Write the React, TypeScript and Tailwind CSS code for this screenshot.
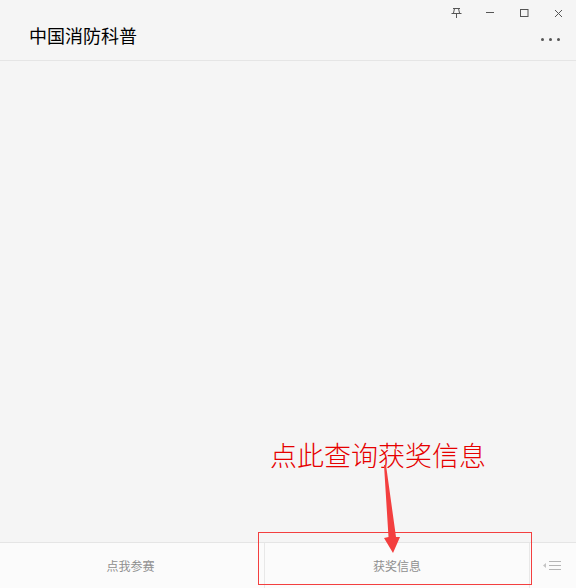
import React from "react";

const cjk = "font-['Noto_Sans_CJK_SC','Liberation_Sans',sans-serif]";

export default function App() {
  return (
    <div className={`relative flex h-[588px] w-[576px] flex-col overflow-hidden bg-[#f5f5f5] ${cjk}`}>
      <header className="relative flex h-[61px] shrink-0 items-end border-b border-[#e5e5e5] pb-[11px] pl-[29px]">
        <h1 className="text-[18px] leading-[27px] font-normal text-black">中国消防科普</h1>
        <div className="absolute top-[3px] right-0 flex h-[20px] items-center text-[#555]">
          <span className="flex w-[34px] justify-center">
            <svg width="11" height="10" viewBox="0 0 11 10" fill="none" stroke="#555" strokeWidth="1">
              <path d="M2 .5h7M3.5.5 2.5 5M7.5.5 8.5 5M.5 5.5h10M5.5 5.5V10" />
            </svg>
          </span>
          <span className="flex w-[34px] justify-center">
            <svg width="8" height="2" viewBox="0 0 8 2"><path d="M0 .5h8" stroke="#555" /></svg>
          </span>
          <span className="flex w-[34px] justify-center">
            <svg width="9" height="9" viewBox="0 0 9 9" fill="none"><rect x=".5" y=".5" width="7.5" height="7" stroke="#555" /></svg>
          </span>
          <span className="flex w-[35px] justify-center">
            <svg width="9" height="9" viewBox="0 0 9 9" fill="none" stroke="#555"><path d="m1 1 7 7M8 1 1 8" /></svg>
          </span>
        </div>
        <div className="absolute top-[38px] right-[16px] flex gap-[5px]">
          <span className="h-[3px] w-[3px] rounded-full bg-[#555]" />
          <span className="h-[3px] w-[3px] rounded-full bg-[#555]" />
          <span className="h-[3px] w-[3px] rounded-full bg-[#555]" />
        </div>
      </header>

      <main className="flex-1" />

      <footer className="flex h-[46px] shrink-0 border-t border-[#e5e5e5] bg-[#fbfbfb] text-[12px] text-[#8f8f8f]">
        <div className="flex w-[265px] items-center justify-center border-r border-[#e8e8e8] pr-[3px]">点我参赛</div>
        <div className="flex w-[265px] items-center justify-center border-r border-[#e8e8e8]">获奖信息</div>
        <div className="flex flex-1 items-center pl-[13px]">
          <svg width="18" height="11" viewBox="0 0 18 11" fill="none">
            <path d="M0 5.5 3 3v5z" fill="#c4c4c4" />
            <path d="M6 1.5h12M6 5.5h12M6 9.5h12" stroke="#b5b5b5" />
          </svg>
        </div>
      </footer>

      <div className="absolute top-[532px] left-[258px] h-[53px] w-[274px] border border-[#f33f3f]" />
      <div className="absolute top-[435px] left-[270px] text-[27px] leading-[40px] font-light whitespace-nowrap text-[#e60000]">点此查询获奖信息</div>
      <svg className="absolute top-[465px] left-[378px]" width="28" height="90" viewBox="0 0 28 90">
        <path d="M6 0 8 0 18 72 22 72 15 88 6 73 10.5 72z" fill="#f33f3f" />
      </svg>
    </div>
  );
}
